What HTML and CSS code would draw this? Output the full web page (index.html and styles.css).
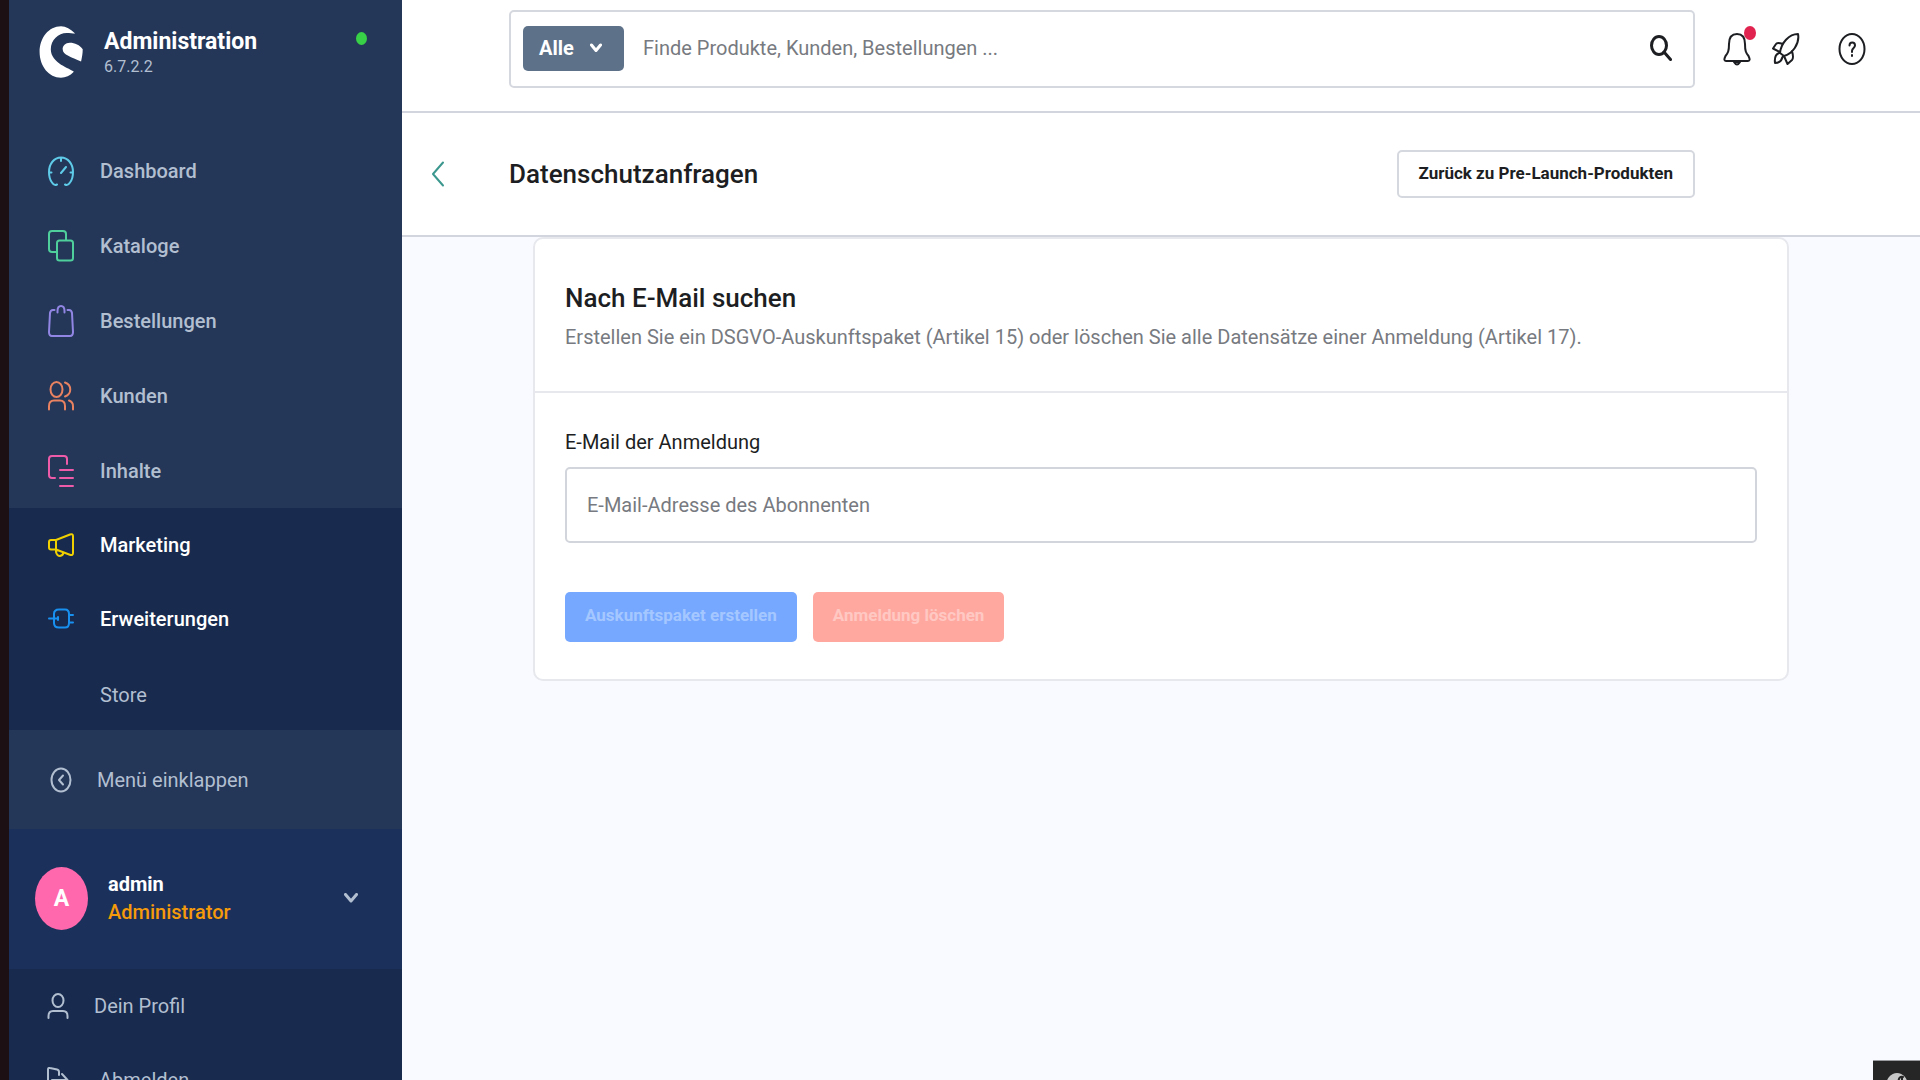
FILE: index.html
```html
<!DOCTYPE html>
<html lang="de">
<head>
<meta charset="utf-8">
<meta name="viewport" content="width=device-width, initial-scale=1">
<title>Datenschutzanfragen | Administration</title>
<link rel="stylesheet" href="styles.css">
</head>
<body>
<div class="app">
  <aside class="sidebar">
    <div class="brand">
      <svg class="brand-logo" viewBox="117 76 132 158" aria-hidden="true"><path d="M226 99C212 85 198 77 183 77C146 77 118 112 118 155C118 198 146 233 183 233C197 233 210 228 222 215C212 206 152 190 152 147C152 118 175 97 200 97C210 97 218 98 226 99Z"/><path d="M249 147C240 134 225 127 210 127C196 127 188 137 188 146C188 165 215 170 244 184C247 170 249 160 249 147Z"/></svg>
      <div class="brand-text">
        <span class="brand-name">Administration</span>
        <span class="brand-version">6.7.2.2</span>
      </div>
      <span class="brand-status"></span>
    </div>
    <nav class="nav">
      <a class="nav-item" href="#"><svg class="icon cyan" viewBox="0 0 26 30"><path d="M9 28.500C7 29.500 5.500 29 4 26.500C2 24 1 20 1 16C1 8 6 1.500 13 1.500S25 8 25 16C25 20 24 24 22 26.500C20.500 29 19 29.500 17 28.500M13 2v3M1.500 16.500h2M24.500 16.500h-2M13 17l5-6"/></svg>Dashboard</a>
      <a class="nav-item" href="#"><svg class="icon green" viewBox="0 0 26 32"><rect x="9" y="10.500" width="16" height="20" rx="2.500"/><path d="M9 22H4Q1 22 1 19V4Q1 1 4 1H15Q18 1 18 4V10"/></svg>Kataloge</a>
      <a class="nav-item" href="#"><svg class="icon violet" viewBox="0 0 26 32"><path d="M6.500 5H5Q2.500 5 2 8L1 27Q1 31 4 31H22Q25 31 25 27L24 8Q23.500 5 21 5H19.500M9.500 7.500V6Q9.500 1 13 1T16.500 6V7.500"/></svg>Bestellungen</a>
      <a class="nav-item" href="#"><svg class="icon orange" viewBox="0 0 26 30"><ellipse cx="8.500" cy="8.500" rx="6" ry="7.500"/><path d="M1 28.500V25Q1 19.500 6 19.500H12Q17 19.500 17 25V28.500M17 1.500C24 4 24 13 17 15.500M21 19.500Q25 21 25 25V28.500"/></svg>Kunden</a>
      <a class="nav-item" href="#"><svg class="icon pink" viewBox="0 0 26 32"><path d="M7 23H4Q1 23 1 20V4Q1 1 4 1H16Q19 1 19 4V9M12 15H25M12 23H25M12 31H25"/></svg>Inhalte</a>
      <div class="nav-group">
        <a class="nav-item active" href="#"><svg class="icon yellow" viewBox="0 0 26 30"><path d="M8 10L22 4.500Q25 3.500 25 6V23Q25 25.500 22.500 25L8 19.500M8 10H3Q1 10 1 12V17.500Q1 19.500 3 19.500H8ZM8 20V22Q9 26 12 26Q15 25.500 15.500 22.500"/></svg>Marketing</a>
        <a class="nav-item active" href="#"><svg class="icon blue" viewBox="0 0 26 30"><path d="M6 14.500V10Q6 5.500 11 5.500H17Q21 5.500 21 10V19Q21 23.500 17 23.500H11Q6 23.500 6 19ZM1 14.500H10M10 13V16M21 11H25M21 18.500H25"/></svg>Erweiterungen</a>
        <a class="nav-item child" href="#">Store</a>
      </div>
    </nav>
    <button class="collapse" type="button"><svg class="icon" viewBox="0 0 26 30"><ellipse cx="13" cy="15" rx="9.500" ry="11.500"/><path d="M15 10.500L11 15L15 19.500"/></svg>Menü einklappen</button>
    <button class="user" type="button">
      <span class="avatar">A</span>
      <span class="user-text"><span class="user-name">admin</span><span class="user-role">Administrator</span></span>
      <svg class="user-chevron" viewBox="0 0 14 10"><path d="M1.500 1.500L7 8L12.500 1.500"/></svg>
    </button>
    <div class="user-menu">
      <a class="user-link" href="#"><svg class="icon-small" viewBox="0 0 22 26"><ellipse cx="11" cy="7.500" rx="5.500" ry="6.500"/><path d="M1.500 25V23Q1.500 18 6 18H16Q20.500 18 20.500 23V25"/></svg>Dein Profil</a>
      <a class="user-link logout" href="#"><svg class="icon-small" viewBox="0 0 22 26"><path d="M12 8V5Q12 3 10 2.500L3 1Q1 .5 1 2.500V23Q1 25 3 25H10M5 13H20M15 7L20.500 13L15 19"/></svg>Abmelden</a>
    </div>
  </aside>
  <div class="page">
    <header class="topbar">
      <form class="search" role="search">
        <button class="search-type" type="button">Alle <svg class="search-chevron" viewBox="0 0 12 10"><path d="M1.500 2L6 7.500L10.500 2"/></svg></button>
        <input class="search-input" type="search" aria-label="Suche" placeholder="Finde Produkte, Kunden, Bestellungen ...">
        <svg class="search-icon" viewBox="0 0 22 26"><ellipse cx="9" cy="10.500" rx="7.500" ry="9"/><path d="M14 17L20.500 24.500"/></svg>
      </form>
      <div class="actions">
        <button class="action bell" type="button" aria-label="Benachrichtigungen"><svg class="action-icon" viewBox="0 0 28 34"><path d="M14 2C8 2 6 7 6 12C6 19 5 21 2.500 24Q0 29 3 29H25Q28 29 25.500 24C23 21 22 19 22 12C22 7 20 2 14 2Z"/><path d="M11 30Q14 35 17 30Z"/></svg><span class="badge"></span></button>
        <button class="action rocket" type="button" aria-label="Neuigkeiten"><svg class="action-icon" viewBox="0 0 28 34"><path d="M8 21C9 11 17 2 26 2C28 12 20 22 12 24ZM11 12Q5 10 4 12L1 16.500L8 20M20 19Q22 26 20 28L15.500 32L12 24M7 21Q2 23 3 31Q9 31 10.500 25M8 21L12 24"/></svg></button>
        <button class="action" type="button" aria-label="Hilfe"><svg class="action-icon" viewBox="0 0 28 34"><ellipse cx="14" cy="17" rx="12.500" ry="15"/><path d="M11.500 13.500C11.500 9.500 17 9.500 17 13.500C17 16 14 16 14 19V20M14 23V24"/></svg></button>
      </div>
    </header>
    <div class="page-head">
      <a class="back" href="#" aria-label="Zurück"><svg class="back-icon" viewBox="0 0 14 26"><path d="M12 1.500L2 13L12 24.500"/></svg></a>
      <h1 class="page-title">Datenschutzanfragen</h1>
      <button class="btn btn-outline" type="button">Zurück zu Pre-Launch-Produkten</button>
    </div>
    <main class="content">
      <section class="card">
        <div class="card-head">
          <h2 class="card-title">Nach E-Mail suchen</h2>
          <p class="card-desc">Erstellen Sie ein DSGVO-Auskunftspaket (Artikel 15) oder löschen Sie alle Datensätze einer Anmeldung (Artikel 17).</p>
        </div>
        <form class="card-body">
          <label class="label" for="email">E-Mail der Anmeldung</label>
          <input class="field" id="email" type="email" placeholder="E-Mail-Adresse des Abonnenten">
          <div class="buttons">
            <button class="btn btn-primary" type="button" disabled>Auskunftspaket erstellen</button>
            <button class="btn btn-danger" type="button" disabled>Anmeldung löschen</button>
          </div>
        </form>
      </section>
    </main>
  </div>
</div>
<button class="debug" type="button" aria-label="Symfony Toolbar"><svg class="debug-icon" viewBox="0 0 24 28"><ellipse class="debug-disc" cx="12" cy="14" rx="11" ry="13"/><path d="M18 5Q14 4 13.500 9L11.500 20M17 5.500V8"/></svg></button>
</body>
</html>
```
FILE: styles.css
```css
* { box-sizing: border-box; }

body {
  margin: 0;
  font-family: Roboto, "Liberation Sans", sans-serif;
  font-size: 20px;
  line-height: 28px;
  color: #1c1e22;
  background: #f9faff;
}

button, input { font: inherit; color: inherit; }
button { border: 0; background: none; padding: 0; text-align: left; }
a { color: inherit; text-decoration: none; }
svg { flex: none; fill: none; stroke: currentColor; stroke-width: 2; stroke-linecap: round; stroke-linejoin: round; }

.app { display: flex; height: 100vh; overflow: hidden; }

/* Sidebar */
.sidebar {
  flex: none;
  width: 402px;
  display: flex;
  flex-direction: column;
  border-left: 9px solid #1c1015;
  background: #243758;
  color: #b2bfd1;
  overflow: hidden;
}
.brand { flex: none; height: 133px; display: flex; align-items: flex-start; padding: 26px 35px 0 30px; }
.brand-logo { width: 44px; height: 52px; fill: #fff; stroke: none; }
.brand-text { display: flex; flex-direction: column; margin-left: 21px; padding-top: 2px; }
.brand-name { font-size: 23px; font-weight: 700; color: #fff; }
.brand-version { font-size: 16px; line-height: 22px; }
.brand-status { width: 11px; height: 13px; margin: 6px 0 0 auto; border-radius: 50%; background: #37d046; }

.nav { flex: none; }
.nav-item { display: flex; align-items: center; gap: 26px; height: 75px; padding-left: 39px; font-weight: 500; }
.nav-group { background: #182b4e; }
.nav-group .nav-item { height: 74px; }
.active { color: #fff; }
.nav-group .child { padding: 4px 0 0 91px; font-weight: 400; }
.icon { width: 26px; height: 32px; }
.cyan { color: #5fcbe8; }
.green { color: #4fcf9b; }
.violet { color: #9286e4; }
.orange { color: #e88260; }
.pink { color: #ee5ba8; }
.yellow { color: #f0d000; }
.blue { color: #1890f0; }

.collapse { flex: none; display: flex; align-items: center; gap: 23px; height: 99px; padding-left: 39px; }
.user { flex: none; display: flex; align-items: center; height: 140px; padding: 0 44px 2px 26px; background: #1b305b; }
.avatar { width: 53px; height: 63px; border-radius: 50%; background: #ff68ac; color: #fff; font-size: 23px; font-weight: 700; line-height: 63px; text-align: center; }
.user-text { flex: 1; display: flex; flex-direction: column; margin-left: 20px; }
.user-name { color: #fff; font-weight: 700; }
.user-role { color: #f59b0b; font-weight: 500; }
.user-chevron { width: 14px; height: 10px; stroke-width: 3; }
.user-menu { flex: none; background: #182b4e; }
.user-link { display: flex; align-items: center; gap: 25px; height: 74px; padding-left: 38px; }
.logout { gap: 30px; }
.icon-small { width: 22px; height: 26px; }

/* Top bar */
.page { flex: 1; min-width: 0; }
.topbar, .page-head { background: #fff; border-bottom: 2px solid #d3d5de; }
.topbar { display: flex; height: 113px; padding: 10px 54px 0 107px; }
.search { flex: 1; display: flex; align-items: center; height: 78px; padding: 0 21px 2px 12px; border: 2px solid #d6d8df; border-radius: 5px; }
.search-type { display: flex; align-items: center; justify-content: space-between; width: 101px; height: 45px; padding: 0 22px 0 16px; border-radius: 5px; background: #5d7289; color: #fff; font-weight: 700; }
.search-chevron { width: 12px; height: 10px; stroke-width: 3; }
.search-input { flex: 1; min-width: 0; padding: 0; margin-left: 19px; border: 0; background: none; }
::placeholder { color: #777a80; opacity: 1; }
.search-icon { width: 22px; height: 26px; stroke-width: 3; }
.actions { display: flex; gap: 21px; margin-left: 28px; padding-top: 22px; }
.action { position: relative; width: 28px; height: 34px; }
.action-icon { display: block; width: 28px; height: 34px; }
.rocket { margin-right: 17px; }
.badge { position: absolute; top: -6px; right: -5px; width: 12px; height: 14px; border-radius: 50%; background: #e1234f; }

/* Page header */
.page-head { display: flex; align-items: center; height: 124px; padding: 0 225px 0 29px; }
.back { width: 78px; color: #3c988f; }
.back-icon { display: block; width: 14px; height: 26px; }
.page-title { flex: 1; margin: 0; font-size: 26px; font-weight: 500; }
.btn { border-radius: 5px; padding: 0 20px 2px; font-size: 17px; font-weight: 700; text-align: center; }
.btn-outline { height: 48px; border: 2px solid #d6d8df; background: #fff; }

/* Card */
.content { padding: 0 131px; }
.card { border: 2px solid #e7e8ee; border-radius: 10px; background: #fff; }
.card-head { height: 154px; padding: 43px 30px 0; border-bottom: 2px solid #e7e8ee; }
.card-title { margin: 0; font-size: 26px; line-height: 32px; font-weight: 500; }
.card-desc { margin: 9px 0 0; color: #777a80; }
.card-body { display: flex; flex-direction: column; padding: 35px 30px 37px; }
.label { margin-bottom: 11px; }
.field { height: 76px; padding: 0 20px; border: 2px solid #d3d5dc; border-radius: 5px; background: #fff; }
.buttons { display: flex; gap: 16px; margin-top: 49px; }
.buttons .btn { height: 50px; padding-bottom: 4px; }
.btn-primary { background: #76a8ff; color: #a5c7ff; }
.btn-danger { background: #ffa8a0; color: #ffc8c3; }

/* Developer toolbar toggle, pinned to the window corner */
.debug { position: fixed; right: 0; bottom: 0; width: 47px; height: 20px; padding: 11px 0 0 12px; overflow: hidden; border-top: 1px solid #9b9ca0; background: #262626; color: #262626; }
.debug-icon { display: block; width: 24px; height: 28px; }
.debug-disc { fill: #c8c8c8; stroke: none; }
```
